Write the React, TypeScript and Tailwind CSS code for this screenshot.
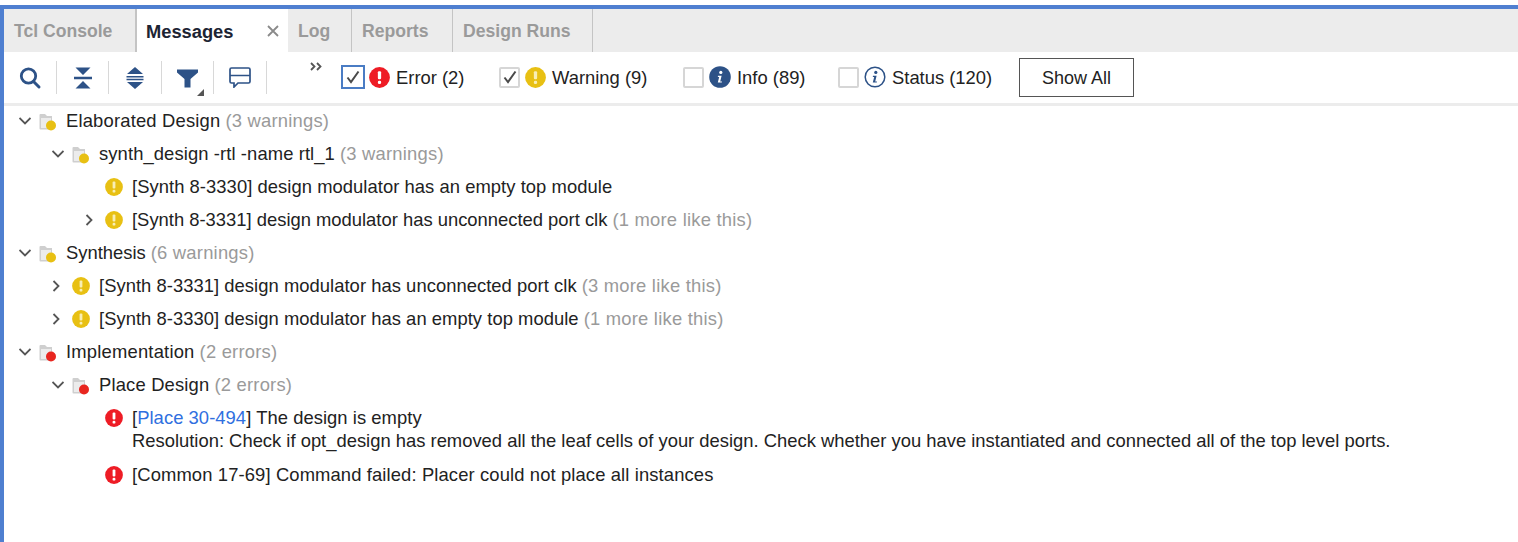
import React from "react";

const FONT = { fontFamily: '"Liberation Sans", Arial, sans-serif' };

function Chevron({ open }: { open: boolean }) {
  return (
    <svg width="12" height="12" viewBox="0 0 12 12" className="shrink-0">
      {open ? (
        <path d="M0.5 3 L6 8.5 L11.5 3" fill="none" stroke="#555" strokeWidth="1.8" />
      ) : (
        <path d="M1.5 1 L6.5 6 L1.5 11" fill="none" stroke="#555" strokeWidth="1.8" />
      )}
    </svg>
  );
}

function Badge({ color, size = 18 }: { color: string; size?: number }) {
  const mark = color === "#e8c013" ? "#f8eeb4" : "#fff";
  return (
    <svg width={size} height={size} viewBox="0 0 18 18" className="shrink-0">
      <circle cx="9" cy="9" r="8.9" fill={color} />
      <rect x="7.6" y="3.6" width="2.8" height="6.8" rx="1" fill={mark} />
      <rect x="7.6" y="11.8" width="2.8" height="2.8" rx="1.2" fill={mark} />
    </svg>
  );
}

function FolderIcon({ color }: { color: string }) {
  return (
    <svg width="20" height="20" viewBox="0 0 20 20" className="shrink-0">
      <path d="M0.5 4 Q0.5 3 1.5 3 H6 L8 5 H13 V18.5 H1.5 Q0.5 18.5 0.5 17.5 Z" fill="#cfcfcf" />
      <path d="M2 7 H12 V17 H2 Z" fill="#ececec" />
      <circle cx="12" cy="14.5" r="5" fill={color} />
    </svg>
  );
}

function Row({
  indent,
  chevron,
  icon,
  children,
  note,
  labelClass,
}: {
  indent: number;
  chevron?: "open" | "closed";
  icon: React.ReactNode;
  children: React.ReactNode;
  note?: string;
  labelClass?: string;
}) {
  return (
    <div className="flex h-[33px] items-center whitespace-nowrap" style={{ paddingLeft: indent }}>
      <span className="flex w-[20px] shrink-0 items-center justify-start">
        {chevron && <Chevron open={chevron === "open"} />}
      </span>
      <span className="flex w-[27px] shrink-0 items-center">{icon}</span>
      <span className={"text-[#222] " + (labelClass ?? "")}>{children}</span>
      {note && <span className="ml-[5px] tracking-[0.22px] text-[#9a9a9a]">{note}</span>}
    </div>
  );
}

function Tab({ label, active, w }: { label: string; active?: boolean; w: number }) {
  return (
    <div
      className={
        active
          ? "relative flex h-full shrink-0 items-center border-l border-[#c4c4c4] bg-white pl-[9px] pt-[2px] text-[18.3px] font-bold text-[#1c2433]"
          : "flex h-full shrink-0 items-center border-r border-[#c4c4c4] pl-[10px] pt-[2px] font-bold text-[#9a9a9a]"
      }
      style={{ width: w }}
    >
      {label}
      {active && (
        <span className="absolute right-[9px] top-[16px]">
          <svg width="12" height="12" viewBox="0 0 12 12" className="block">
            <path d="M1 1 L11 11 M11 1 L1 11" stroke="#8a8a8a" strokeWidth="1.8" />
          </svg>
        </span>
      )}
    </div>
  );
}

function Sep() {
  return <span className="h-[33px] w-px shrink-0 bg-[#d8d8d8]" />;
}

function Check({ checked, focus }: { checked?: boolean; focus?: boolean }) {
  return (
    <span
      className={
        focus
          ? "flex h-[24px] w-[24px] shrink-0 items-center justify-center border-2 border-[#4a7cc4] bg-white"
          : "flex h-[21px] w-[21px] shrink-0 items-center justify-center rounded-[2px] border-2 border-[#d6d6d6] bg-white"
      }
    >
      {checked && (
        <svg width="16" height="16" viewBox="0 0 16 16">
          <path d="M2.5 8.5 L6 13 L13.5 2.5" fill="none" stroke="#4a4a4a" strokeWidth="2" />
        </svg>
      )}
    </span>
  );
}

function InfoIcon({ solid }: { solid?: boolean }) {
  return (
    <svg width="22" height="22" viewBox="0 0 22 22" className="shrink-0">
      <circle cx="11" cy="11" r={solid ? 10.8 : 9.8} fill={solid ? "#2d5287" : "#fff"} stroke="#2d5287" strokeWidth={solid ? 0 : 1.5} />
      <circle cx="11.8" cy="6.4" r="1.6" fill={solid ? "#fff" : "#2d5287"} />
      <path d="M9 9.8 H12.6 L11.2 15.4 H13 L12.8 16.6 H8.8 L10.2 11 H8.8 Z" fill={solid ? "#fff" : "#2d5287"} />
    </svg>
  );
}

function Filter({ check, icon, label, gap, w }: { check: React.ReactNode; icon: React.ReactNode; label: string; gap: number; w: number }) {
  return (
    <div className="flex shrink-0 items-center" style={{ width: w }}>
      {check}
      <span className="flex items-center" style={{ marginLeft: gap }}>{icon}</span>
      <span className="ml-[6px] whitespace-nowrap text-[#222]">{label}</span>
    </div>
  );
}

export default function App() {
  return (
    <div className="h-[542px] w-[1518px] overflow-hidden bg-white pt-[5px] text-[17.6px]" style={FONT}>
      <div className="flex h-[537px] flex-col border-l-[4px] border-t-[4px] border-[#4f7fd0]">
        <div className="flex h-[43px] shrink-0 items-stretch bg-[#ececec]">
          <Tab label="Tcl Console" w={132} />
          <Tab label="Messages" active w={152} />
          <Tab label="Log" w={64} />
          <Tab label="Reports" w={101} />
          <Tab label="Design Runs" w={140} />
        </div>

        <div className="flex h-[54px] shrink-0 items-center border-b-[3px] border-[#ececec] text-[18.4px]">
          <div className="flex w-[53px] shrink-0 items-center justify-between pl-[14px]">
            <svg width="24" height="24" viewBox="0 0 24 24">
              <circle cx="10.5" cy="10" r="7.2" fill="none" stroke="#2d5287" strokeWidth="2.8" />
              <path d="M15.5 15.5 L21 21" stroke="#2d5287" strokeWidth="3" strokeLinecap="round" />
            </svg>
            <Sep />
          </div>
          <div className="flex w-[52px] shrink-0 items-center justify-between pl-[17px]">
            <svg width="18" height="22" viewBox="0 0 18 22">
              <path d="M1.5 0.5 H16.5 L9 8 Z M0 9.8 H18 V12.2 H0 Z M9 14 L16.5 21.5 H1.5 Z" fill="#2d5287" />
            </svg>
            <Sep />
          </div>
          <div className="flex w-[53px] shrink-0 items-center justify-between pl-[17px]">
            <svg width="18" height="22" viewBox="0 0 18 22">
              <path d="M9 0 L17 7 H1 Z M0.5 9 H17.5 V10.4 H0.5 Z M0.5 11.8 H17.5 V13.2 H0.5 Z M1 15 H17 L9 22 Z" fill="#2d5287" />
            </svg>
            <Sep />
          </div>
          <div className="flex w-[52px] shrink-0 items-center justify-between pl-[15px]">
            <svg width="27" height="36" viewBox="0 0 27 36">
              <path d="M0 9.5 H21 V12.5 L13.5 19 V27.5 H7.5 V19 L0 12.5 Z" fill="#2d5287" />
              <path d="M27 29 V36 H20 Z" fill="#555" />
            </svg>
            <Sep />
          </div>
          <div className="flex w-[53px] shrink-0 items-center justify-between pl-[15px]">
            <svg width="22" height="21" viewBox="0 0 22 21">
              <path d="M1 2.5 Q1 1 2.5 1 H19.5 Q21 1 21 2.5 V14.5 Q21 16 19.5 16 H9 L5 20 V16 H2.5 Q1 16 1 14.5 Z M1 8.5 H21" fill="none" stroke="#2d5287" strokeWidth="1.7" />
            </svg>
            <Sep />
          </div>
          <div className="flex w-[74px] shrink-0 justify-start self-start pl-[43px] pt-[10px]">
            <svg width="13" height="9" viewBox="0 0 13 9">
              <path d="M1 1 L4.5 4.5 L1 8 M7 1 L10.5 4.5 L7 8" fill="none" stroke="#555" strokeWidth="1.8" />
            </svg>
          </div>
          <Filter w={158} gap={4} check={<Check checked focus />} icon={<Badge color="#ee1c25" size={21} />} label="Error (2)" />
          <Filter w={184} gap={5} check={<Check checked />} icon={<Badge color="#e8c013" size={21} />} label="Warning (9)" />
          <Filter w={155} gap={5} check={<Check />} icon={<InfoIcon solid />} label="Info (89)" />
          <Filter w={181} gap={5} check={<Check />} icon={<InfoIcon />} label="Status (120)" />
          <button className="flex h-[39px] w-[115px] shrink-0 items-center justify-center border border-[#555] bg-white pt-px text-[18px] text-[#222]">
            Show All
          </button>
        </div>

        <div className="-mt-[2px] flex flex-col text-[18.4px]">
          <Row indent={15} chevron="open" icon={<FolderIcon color="#e8c013" />} note="(3 warnings)" labelClass="tracking-[0.18px]">Elaborated Design</Row>
          <Row indent={48} chevron="open" icon={<FolderIcon color="#e8c013" />} note="(3 warnings)" labelClass="tracking-[0.1px]">synth_design -rtl -name rtl_1</Row>
          <Row indent={81} icon={<Badge color="#e8c013" />} labelClass="tracking-[0.05px]">[Synth 8-3330] design modulator has an empty top module</Row>
          <Row indent={81} chevron="closed" icon={<Badge color="#e8c013" />} note="(1 more like this)">[Synth 8-3331] design modulator has unconnected port clk</Row>
          <Row indent={15} chevron="open" icon={<FolderIcon color="#e8c013" />} note="(6 warnings)">Synthesis</Row>
          <Row indent={48} chevron="closed" icon={<Badge color="#e8c013" />} note="(3 more like this)" labelClass="tracking-[0.04px]">[Synth 8-3331] design modulator has unconnected port clk</Row>
          <Row indent={48} chevron="closed" icon={<Badge color="#e8c013" />} note="(1 more like this)" labelClass="tracking-[0.04px]">[Synth 8-3330] design modulator has an empty top module</Row>
          <Row indent={15} chevron="open" icon={<FolderIcon color="#e8261f" />} note="(2 errors)" labelClass="tracking-[0.2px]">Implementation</Row>
          <Row indent={48} chevron="open" icon={<FolderIcon color="#e8261f" />} note="(2 errors)" labelClass="tracking-[0.17px]">Place Design</Row>
          <div className="flex h-[57px] whitespace-nowrap pl-[101px] pt-[5px]">
            <span className="flex h-[23px] w-[27px] shrink-0 items-center"><Badge color="#ee1c25" /></span>
            <div className="leading-[23px] text-[#222]">
              <div className="tracking-[0.05px]">[<span className="text-[#2f6fe0]">Place 30-494</span>] The design is empty</div>
              <div>Resolution: Check if opt_design has removed all the leaf cells of your design. Check whether you have instantiated and connected all of the top level ports.</div>
            </div>
          </div>
          <Row indent={81} icon={<Badge color="#ee1c25" />} labelClass="tracking-[0.12px]">[Common 17-69] Command failed: Placer could not place all instances</Row>
        </div>
      </div>
    </div>
  );
}
